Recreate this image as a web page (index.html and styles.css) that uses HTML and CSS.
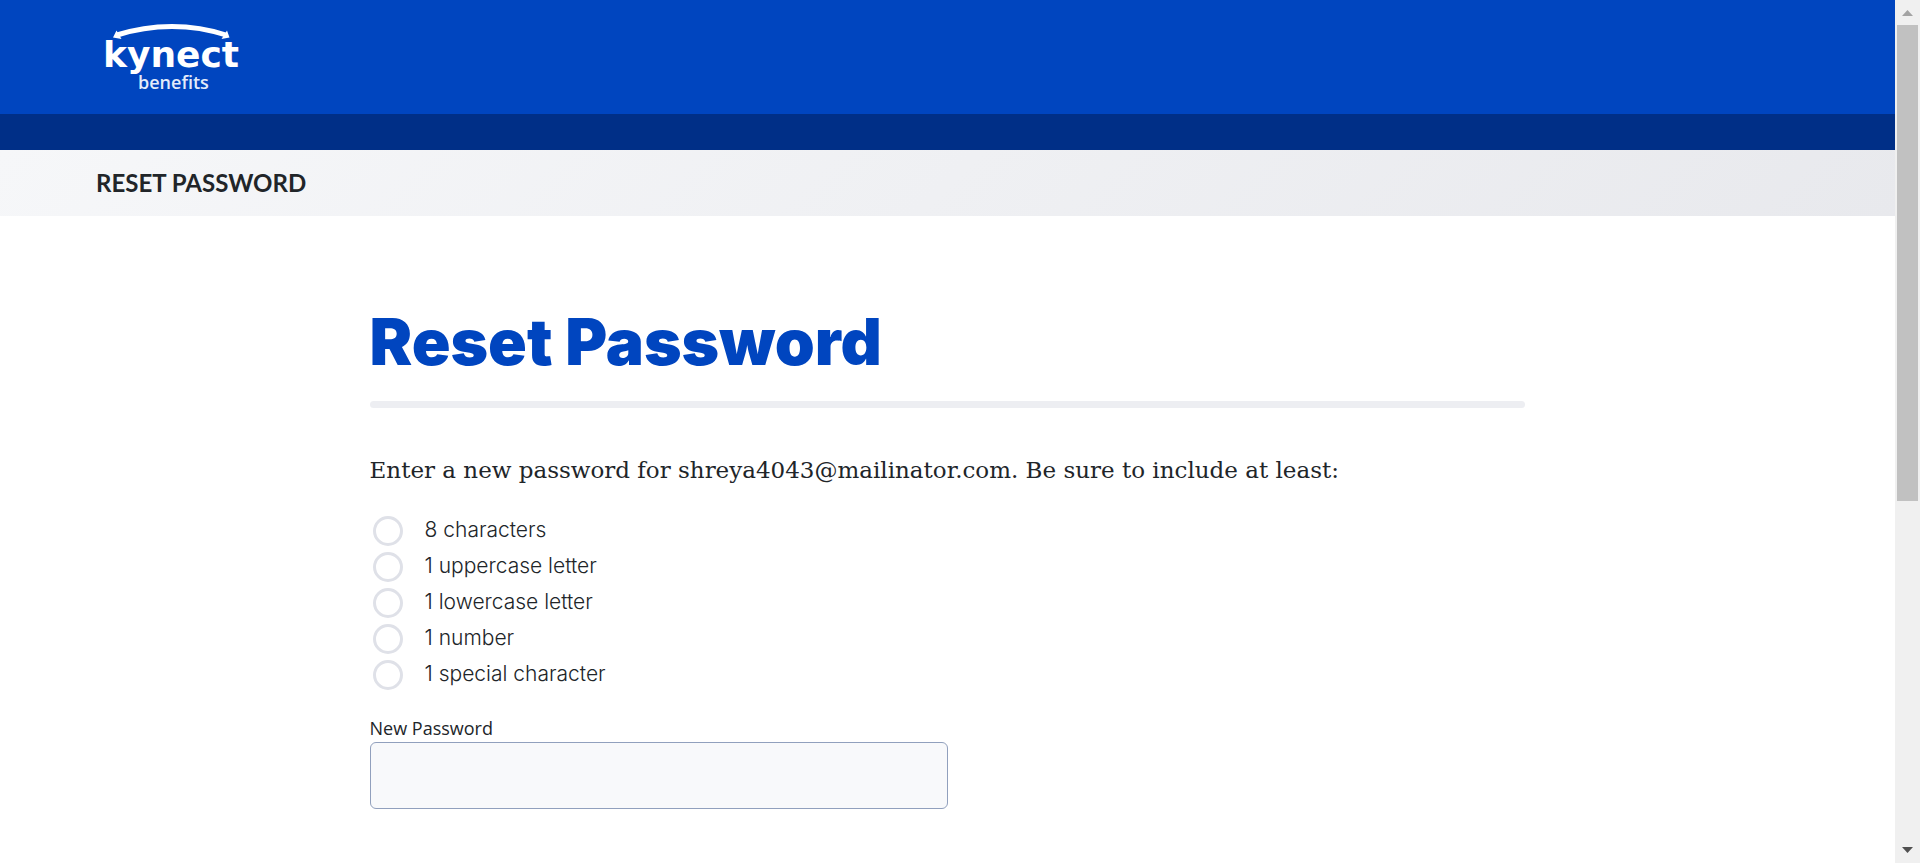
FILE: index.html
```html
<!DOCTYPE html>
<html lang="en">
<head>
<meta charset="utf-8">
<title>Reset Password - kynect benefits</title>
<link rel="stylesheet" href="styles.css">
</head>
<body>
<div class="page">
  <header class="site-header">
    <a class="logo" href="#" aria-label="kynect benefits">
      <svg width="146" height="80" viewBox="0 0 146 80">
        <path d="M15 15C50 3.500 90 3.500 124 15" fill="none" stroke="#fff" stroke-width="5"/>
        <path d="M11 17.500L14.500 10.500L19.500 19Z M127.500 17.500L125 10.500L119.500 19Z" fill="#fff"/>
        <text class="logo-name" x="1" y="47">kynect</text>
        <text class="logo-sub" x="36" y="69">benefits</text>
      </svg>
    </a>
  </header>
  <div class="nav-strip"></div>
  <div class="title-bar"><p class="bar-title">RESET PASSWORD</p></div>
  <main class="content">
    <h1 class="heading">Reset Password</h1>
    <hr class="rule">
    <p class="intro">Enter a new password for shreya4043@mailinator.com. Be sure to include at least:</p>
    <ul class="criteria">
      <li class="criterion"><span class="ring"></span><span class="criterion-text">8 characters</span></li>
      <li class="criterion"><span class="ring"></span><span class="criterion-text">1 uppercase letter</span></li>
      <li class="criterion"><span class="ring"></span><span class="criterion-text">1 lowercase letter</span></li>
      <li class="criterion"><span class="ring"></span><span class="criterion-text">1 number</span></li>
      <li class="criterion"><span class="ring"></span><span class="criterion-text">1 special character</span></li>
    </ul>
    <form class="form">
      <label class="label" for="new-password">New Password</label>
      <input class="input" id="new-password" type="password">
    </form>
  </main>
</div>
<div class="scrollbar" aria-hidden="true">
  <svg class="arrow" width="25" height="25" viewBox="0 0 25 25"><path d="M7 16L12.500 10L18 16Z" fill="#a3a3a3"/></svg>
  <div class="track"><div class="thumb"></div></div>
  <svg class="arrow" width="25" height="25" viewBox="0 0 25 25"><path d="M7 9L12.500 15L18 9Z" fill="#505050"/></svg>
</div>
</body>
</html>
```
FILE: styles.css
```css
* { box-sizing: border-box; }
body {
  margin: 0;
  display: flex;
  height: 100vh;
  background: #fff;
  color: #212529;
  font-family: Inter, sans-serif;
}
.page { flex: 1; min-width: 0; overflow: hidden; }
.site-header { background: #0045bf; padding: 20px 102px 14px; }
.logo { display: block; width: 146px; }
.logo svg { display: block; }
.logo-name { font: 700 36px/1 "DejaVu Sans", sans-serif; fill: #fff; }
.logo-sub { font: 600 18px/1 "Open Sans", sans-serif; fill: #e3ebfa; }
.nav-strip { height: 36px; background: #002f87; }
.title-bar {
  background: linear-gradient(135deg, #f6f7f9, #e8e9ed);
  padding: 15px 96px;
}
.bar-title { margin: 0; font-family: Lato, sans-serif; font-size: 24px; line-height: 36px; font-weight: 700; }
.content { width: 61%; margin: 0 auto; padding-top: 90px; }
.heading {
  margin: 0;
  font-size: 64px;
  line-height: 72px;
  font-weight: 900;
  color: #0045bf;
}
.rule { height: 7px; margin: 23px 0 0; border: 0; border-radius: 4px; background: #edeef2; }
.intro {
  margin: 44px 0 0;
  font-family: "DejaVu Serif", serif;
  font-size: 23px;
  line-height: 36px;
}
.criteria { list-style: none; margin: 25px 0 0; padding: 0; }
.criterion {
  display: flex;
  align-items: center;
  gap: 22px;
  height: 36px;
  padding-left: 3px;
}
.criterion-text { font-size: 21px; line-height: 32px; font-weight: 300; padding-bottom: 3px; }
.ring { width: 30px; height: 30px; border: 3px solid #dfe1e8; border-radius: 50%; }
.form { margin-top: 22px; display: grid; gap: 1px; }
.label { font-family: "Open Sans", sans-serif; font-size: 18px; line-height: 26px; }
.input {
  width: 50%;
  height: 67px;
  padding: 0 16px;
  border: 1px solid #91a0bd;
  border-radius: 6px;
  background: #f8f9fb;
  font-size: 20px;
}
.scrollbar { width: 25px; display: flex; flex-direction: column; background: #f0f0f0; }
.arrow { display: block; }
.track { flex: 1; padding: 0 2px; }
.thumb { height: 58.5%; background: #c1c1c1; }
```
